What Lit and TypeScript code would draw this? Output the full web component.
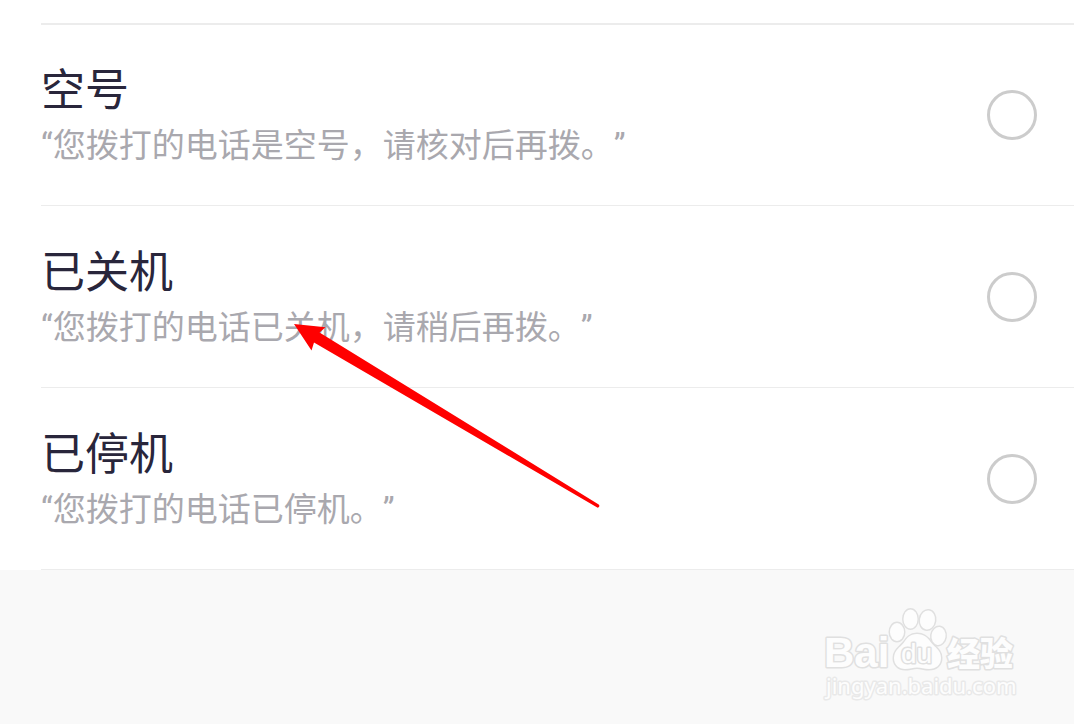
import { LitElement, html, css } from "lit";
import { customElement, property, state } from "lit/decorators.js";

interface Reply {
  id: string;
  title: string;
  message: string;
}

const REPLIES: Reply[] = [
  { id: "vacant", title: "空号", message: "“您拨打的电话是空号，请核对后再拨。”" },
  { id: "off", title: "已关机", message: "“您拨打的电话已关机，请稍后再拨。”" },
  { id: "suspended", title: "已停机", message: "“您拨打的电话已停机。”" },
];

@customElement("reply-option")
export class ReplyOption extends LitElement {
  @property({ attribute: false }) reply!: Reply;
  @property({ type: Boolean }) selected = false;

  static styles = css`
    :host {
      display: block;
    }
    .row {
      display: flex;
      align-items: center;
      justify-content: space-between;
      gap: 24px;
      padding: 36px 37px 35px 0;
      border-bottom: 1px solid #ececec;
      cursor: pointer;
    }
    .text {
      display: flex;
      flex-direction: column;
      min-width: 0;
    }
    .title {
      font-size: 44px;
      line-height: 62px;
      color: #29263b;
    }
    .message {
      font-size: 33px;
      line-height: 48px;
      color: #a9a8ae;
      text-spacing-trim: space-all;
    }
    .radio {
      appearance: none;
      flex: none;
      box-sizing: border-box;
      width: 50px;
      height: 50px;
      margin: 0;
      border: 3px solid #cccccc;
      border-radius: 50%;
      background: #ffffff;
    }
    .radio:checked {
      border: 15px solid #3478f6;
    }
  `;

  private pick() {
    this.dispatchEvent(new CustomEvent("pick", { detail: this.reply.id }));
  }

  render() {
    return html`
      <label class="row" for="choice">
        <span class="text">
          <span class="title">${this.reply.title}</span>
          <span class="message">${this.reply.message}</span>
        </span>
        <input class="radio" id="choice" type="radio" name="reply"
          .checked=${this.selected} @change=${this.pick} />
      </label>
    `;
  }
}

@customElement("site-watermark")
export class SiteWatermark extends LitElement {
  static styles = css`
    :host {
      display: block;
    }
    .mark {
      display: block;
      width: 200px;
      height: 100px;
    }
    .outlined {
      fill: #fdfdfd;
      stroke: #e0e0e0;
      stroke-width: 3px;
      stroke-linejoin: round;
      paint-order: stroke;
    }
    .latin {
      font: bold 42px "Liberation Sans", sans-serif;
    }
    .du {
      font: 28px "Liberation Sans", sans-serif;
    }
    .han {
      font: 900 33px "Noto Sans CJK SC", sans-serif;
    }
    .url {
      font: 22px "Noto Sans", sans-serif;
      stroke: #e9e9e9;
    }
  `;

  render() {
    return html`
      <svg class="mark" viewBox="820 602 200 100" role="img" aria-label="Baidu 经验">
        <text class="outlined latin" x="824" y="667">Bai</text>
        <g class="outlined">
          <ellipse cx="897" cy="632" rx="7" ry="9" />
          <ellipse cx="910.500" cy="619" rx="7" ry="9.500" />
          <ellipse cx="927.500" cy="620" rx="7.500" ry="9.500" transform="rotate(8 927.5 620)" />
          <ellipse cx="938.500" cy="636" rx="7" ry="9" transform="rotate(8 938.5 636)" />
          <path d="M917 634c-7 0-10 4-13 8.500-4 5-10 8-10 15.500 0 7 5 11 11 11 5 0 8-1.500 12-1.500s7 1.500 12 1.500c7 0 12-4 12-11 0-7.500-6-10.500-10-15.500-3-4.500-7-8.500-14-8.500z" />
        </g>
        <text class="outlined du" x="901" y="663">du</text>
        <text class="outlined han" x="947" y="666">经验</text>
        <text class="outlined url" x="826" y="694">jingyan.baidu.com</text>
      </svg>
    `;
  }
}

@customElement("app-root")
export class AppRoot extends LitElement {
  @state() private selected = "";

  static styles = css`
    :host {
      display: flex;
      flex-direction: column;
      position: relative;
      min-height: 100vh;
      background: #f9f9f9;
      font-family: Roboto, "Noto Sans CJK SC", sans-serif;
    }
    .panel {
      padding: 23px 0 0 41px;
      background: #ffffff;
    }
    .list {
      border-top: 1px solid #ececec;
      box-shadow: inset 0 1px #ececec;
    }
    .footer {
      display: flex;
      flex: 1;
      justify-content: flex-end;
      align-items: flex-end;
      padding: 0 54px 22px 0;
    }
    .pointer {
      position: absolute;
      left: 290px;
      top: 320px;
      width: 314px;
      height: 192px;
      pointer-events: none;
    }
  `;

  render() {
    return html`
      <main class="panel">
        <div class="list" role="radiogroup">
          ${REPLIES.map(
            (reply) => html`
              <reply-option
                .reply=${reply}
                .selected=${this.selected === reply.id}
                @pick=${(e: CustomEvent<string>) => (this.selected = e.detail)}
              ></reply-option>
            `,
          )}
        </div>
      </main>
      <footer class="footer"><site-watermark></site-watermark></footer>
      <svg class="pointer" viewBox="290 320 314 192" aria-hidden="true">
        <path fill="#ff0000" d="M294 324L325.500 327.300L319.500 332.500L598.700 504.500Q600.500 506.500 597.700 507.700L314 342.500L311.500 350.500Z" />
      </svg>
    `;
  }
}
